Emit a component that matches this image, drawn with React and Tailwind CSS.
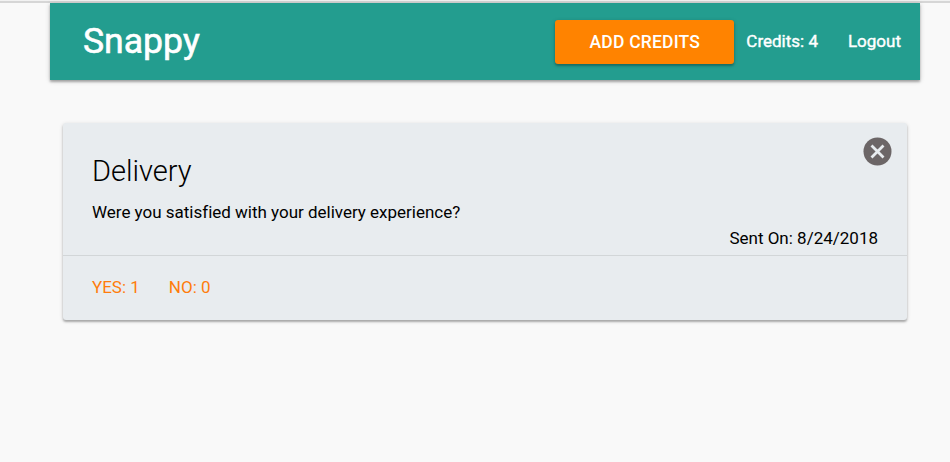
export default function App() {
  return (
    <div className="h-[462px] overflow-hidden bg-[#f9f9f9] font-['Roboto',sans-serif] text-black">
      <div className="h-[3px] border-b-2 border-[#d6d6d6] bg-[#f2f2f2]" />
      <nav className="ml-[50px] flex h-[77px] w-[870px] items-center bg-[#239d8f] pl-[33px] pr-[19px] text-white shadow-[0_2px_2px_0_rgba(0,0,0,0.25),0_1px_5px_0_rgba(0,0,0,0.2)]">
        <a className="text-[35.6px] leading-none [-webkit-text-stroke:0.6px_white]">Snappy</a>
        <div className="ml-auto flex items-center pt-px text-[17px] [-webkit-text-stroke:0.4px_white]">
          <button className="h-[44px] w-[179px] rounded-[3px] bg-[#ff8300] pt-px text-[17.5px] font-medium tracking-[0.2px] shadow-[0_2px_2px_0_rgba(0,0,0,0.2),0_1px_4px_0_rgba(0,0,0,0.2)] [-webkit-text-stroke:0px]">ADD CREDITS</button>
          <span className="ml-[12px]">Credits: 4</span>
          <span className="ml-[30px]">Logout</span>
        </div>
      </nav>
      <main className="ml-[63px] mt-[43px] h-[197px] w-[844px] rounded-[3px] bg-[#e8ecef] shadow-[0_2px_2px_0_rgba(0,0,0,0.25),0_1px_4px_0_rgba(0,0,0,0.15)]">
        <section className="h-[132px] px-[29px] pt-[14px]">
          <div className="flex h-[56px] justify-between">
            <h1 className="mt-[15px] text-[29px] font-light leading-[38px]">Delivery</h1>
            <svg className="-mr-[14px] size-[29px]" viewBox="0 0 29 29">
              <circle cx="14.5" cy="14.5" r="14" fill="#6c6667" />
              <path d="M8.5 8.5 20.5 20.5M20.5 8.5 8.5 20.5" stroke="#e8ecef" strokeWidth="2.8" />
            </svg>
          </div>
          <p className="mt-[7px] text-[17px] leading-[24px] tracking-[-0.01px]">Were you satisfied with your delivery experience?</p>
          <p className="mt-px text-right text-[17px] leading-[26px]">Sent On: 8/24/2018</p>
        </section>
        <footer className="flex h-[65px] items-center gap-[29px] border-t border-[#d2d6d8] pl-[29px] text-[17px] text-[#ff7c0c]">
          <span>YES: 1</span>
          <span>NO: 0</span>
        </footer>
      </main>
    </div>
  );
}
